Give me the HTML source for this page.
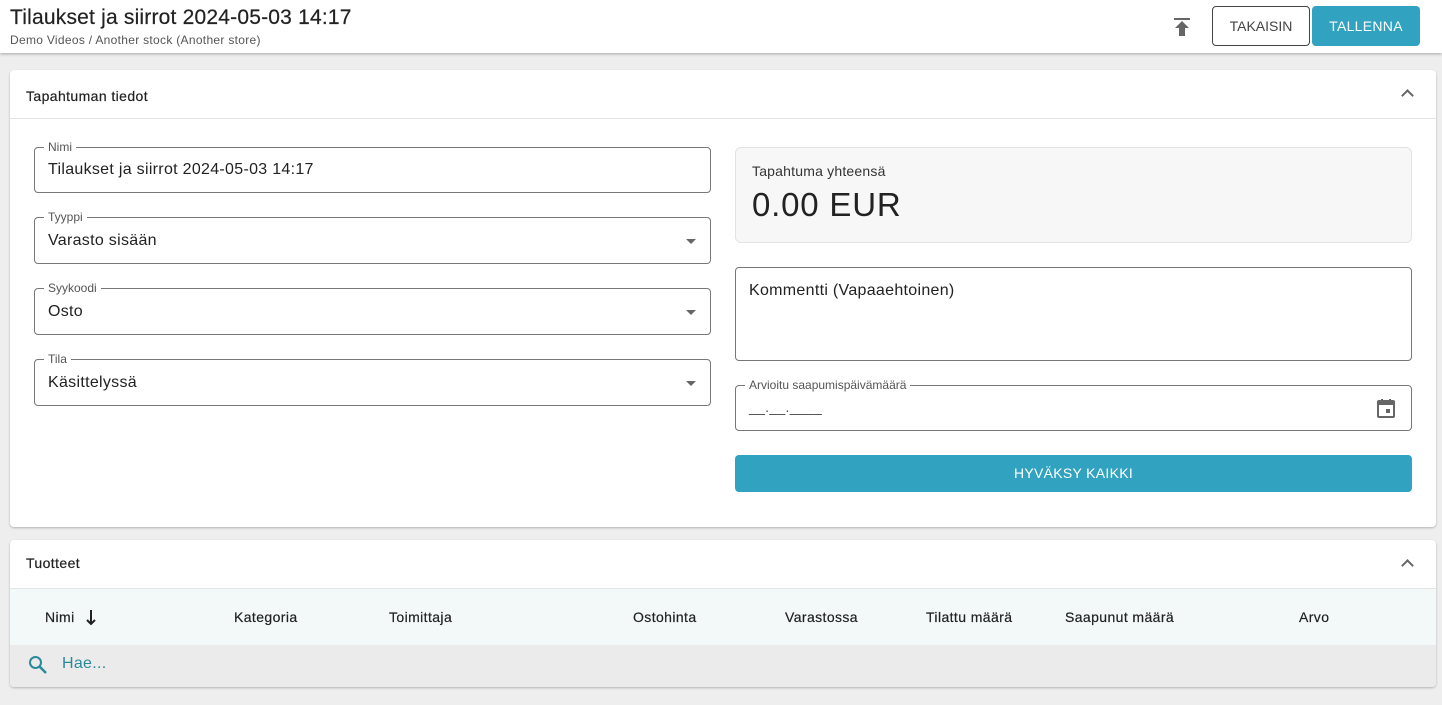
<!DOCTYPE html>
<html><head><meta charset="utf-8"><style>
*{box-sizing:border-box;margin:0;padding:0}
body{width:1442px;height:705px;background:#eeeeee;font-family:"Liberation Sans",sans-serif;color:#222;position:relative;overflow:hidden}
.abs{position:absolute}
.hdr{left:0;top:0;width:1442px;height:53px;background:#fff;box-shadow:0 1px 3px rgba(0,0,0,.3)}
.card{background:#fff;border-radius:4px;box-shadow:0 1px 2px rgba(0,0,0,.25)}
.fld{border:1px solid #777;border-radius:4px}
.lbl{position:absolute;top:-8px;left:9px;background:#fff;padding:0 4px;font-size:12px;color:#555}
.val{position:absolute;left:13px;font-size:16px;color:#222;letter-spacing:.3px}
.arrow{position:absolute;right:14px;top:21px;width:0;height:0;border-left:5px solid transparent;border-right:5px solid transparent;border-top:5px solid #666}
.th{position:absolute;top:609px;font-size:14px;color:#222;letter-spacing:.4px;-webkit-text-stroke:.2px #222}
.chev{position:absolute;width:9px;height:9px;border-left:2px solid #666;border-top:2px solid #666;transform:rotate(45deg)}
</style></head><body>
<div class="abs hdr">
 <div class="abs" style="left:10px;top:6px;font-size:21px;color:#222;letter-spacing:.2px;-webkit-text-stroke:.2px #222">Tilaukset ja siirrot 2024-05-03 14:17</div>
 <div class="abs" style="left:10px;top:33px;font-size:12px;color:#555;letter-spacing:.3px">Demo Videos / Another stock (Another store)</div>
 <svg class="abs" style="left:1173px;top:17px" width="18" height="20" viewBox="0 0 18 20"><rect x="1" y="1" width="16" height="2" fill="#666"/><path d="M9 4 L16 11 H12 V19 H6 V11 H2 Z" fill="#666"/></svg>
 <div class="abs" style="left:1212px;top:6px;width:98px;height:40px;border:1px solid #444;border-radius:4px;font-size:14px;color:#444;text-align:center;line-height:38px">TAKAISIN</div>
 <div class="abs" style="left:1312px;top:6px;width:108px;height:40px;background:#31a2bf;border-radius:4px;font-size:14px;color:#fff;text-align:center;line-height:40px;letter-spacing:.3px">TALLENNA</div>
</div>

<div class="abs card" style="left:10px;top:70px;width:1426px;height:457px"></div>
<div class="abs" style="left:26px;top:88px;font-size:14px;color:#222;letter-spacing:.4px;-webkit-text-stroke:.2px #222">Tapahtuman tiedot</div>
<div class="chev" style="left:1403px;top:91px"></div>
<div class="abs" style="left:10px;top:118px;width:1426px;height:1px;background:#e4e4e4"></div>

<div class="abs fld" style="left:34px;top:147px;width:677px;height:46px"><span class="lbl">Nimi</span><span class="val" style="top:13px">Tilaukset ja siirrot 2024-05-03 14:17</span></div>
<div class="abs fld" style="left:34px;top:217px;width:677px;height:47px"><span class="lbl">Tyyppi</span><span class="val" style="top:14px">Varasto sisään</span><div class="arrow"></div></div>
<div class="abs fld" style="left:34px;top:288px;width:677px;height:47px"><span class="lbl">Syykoodi</span><span class="val" style="top:14px">Osto</span><div class="arrow"></div></div>
<div class="abs fld" style="left:34px;top:359px;width:677px;height:47px"><span class="lbl">Tila</span><span class="val" style="top:14px">Käsittelyssä</span><div class="arrow"></div></div>

<div class="abs" style="left:735px;top:147px;width:677px;height:96px;background:#f7f7f7;border:1px solid #e2e2e2;border-radius:6px">
 <div class="abs" style="left:16px;top:15px;font-size:14px;color:#333;letter-spacing:.2px">Tapahtuma yhteensä</div>
 <div class="abs" style="left:16px;top:38px;font-size:33px;color:#222;letter-spacing:.8px">0.00 EUR</div>
</div>
<div class="abs fld" style="left:735px;top:267px;width:677px;height:94px"><span class="val" style="top:14px;left:13px">Kommentti (Vapaaehtoinen)</span></div>
<div class="abs fld" style="left:735px;top:385px;width:677px;height:46px"><span class="lbl" style="font-size:12px">Arvioitu saapumispäivämäärä</span><span class="val" style="top:13px;font-size:14px;color:#444">__.__.____</span>
 <svg class="abs" style="left:640px;top:12px" width="20" height="20" viewBox="0 0 20 20"><rect x="2" y="3" width="16" height="16" rx="1" fill="none" stroke="#666" stroke-width="2"/><rect x="2" y="3" width="16" height="4" fill="#666"/><rect x="5" y="1" width="2" height="4" fill="#666"/><rect x="13" y="1" width="2" height="4" fill="#666"/><rect x="10" y="11" width="4" height="4" fill="#666"/></svg>
</div>
<div class="abs" style="left:735px;top:455px;width:677px;height:37px;background:#31a2bf;border-radius:4px;color:#fff;font-size:14px;text-align:center;line-height:37px;letter-spacing:.3px">HYVÄKSY KAIKKI</div>

<div class="abs card" style="left:10px;top:540px;width:1426px;height:147px;overflow:hidden">
 <div class="abs" style="left:0;top:48px;width:1426px;height:1px;background:#e4e4e4"></div>
 <div class="abs" style="left:0;top:49px;width:1426px;height:56px;background:#f3f9f9"></div>
 <div class="abs" style="left:0;top:105px;width:1426px;height:42px;background:#ebebeb"></div>
</div>
<div class="abs" style="left:26px;top:555px;font-size:14px;color:#222;letter-spacing:.4px;-webkit-text-stroke:.2px #222">Tuotteet</div>
<div class="chev" style="left:1403px;top:561px"></div>
<div class="th" style="left:45px">Nimi</div>
<svg class="abs" style="left:86px;top:609px" width="10" height="17" viewBox="0 0 10 17"><path d="M5 1 V15 M1 11 L5 15 L9 11" fill="none" stroke="#222" stroke-width="2"/></svg>
<div class="th" style="left:234px">Kategoria</div>
<div class="th" style="left:389px">Toimittaja</div>
<div class="th" style="left:633px">Ostohinta</div>
<div class="th" style="left:785px">Varastossa</div>
<div class="th" style="left:926px">Tilattu määrä</div>
<div class="th" style="left:1065px">Saapunut määrä</div>
<div class="th" style="left:1299px">Arvo</div>
<svg class="abs" style="left:28px;top:655px" width="20" height="20" viewBox="0 0 20 20"><circle cx="7.5" cy="7.5" r="5.5" fill="none" stroke="#2a8a9a" stroke-width="2"/><path d="M11.5 11.5 L18 18" stroke="#2a8a9a" stroke-width="2.5"/></svg>
<div class="abs" style="left:62px;top:655px;font-size:16px;color:#2a8a9a;letter-spacing:.3px">Hae...</div>
</body></html>
